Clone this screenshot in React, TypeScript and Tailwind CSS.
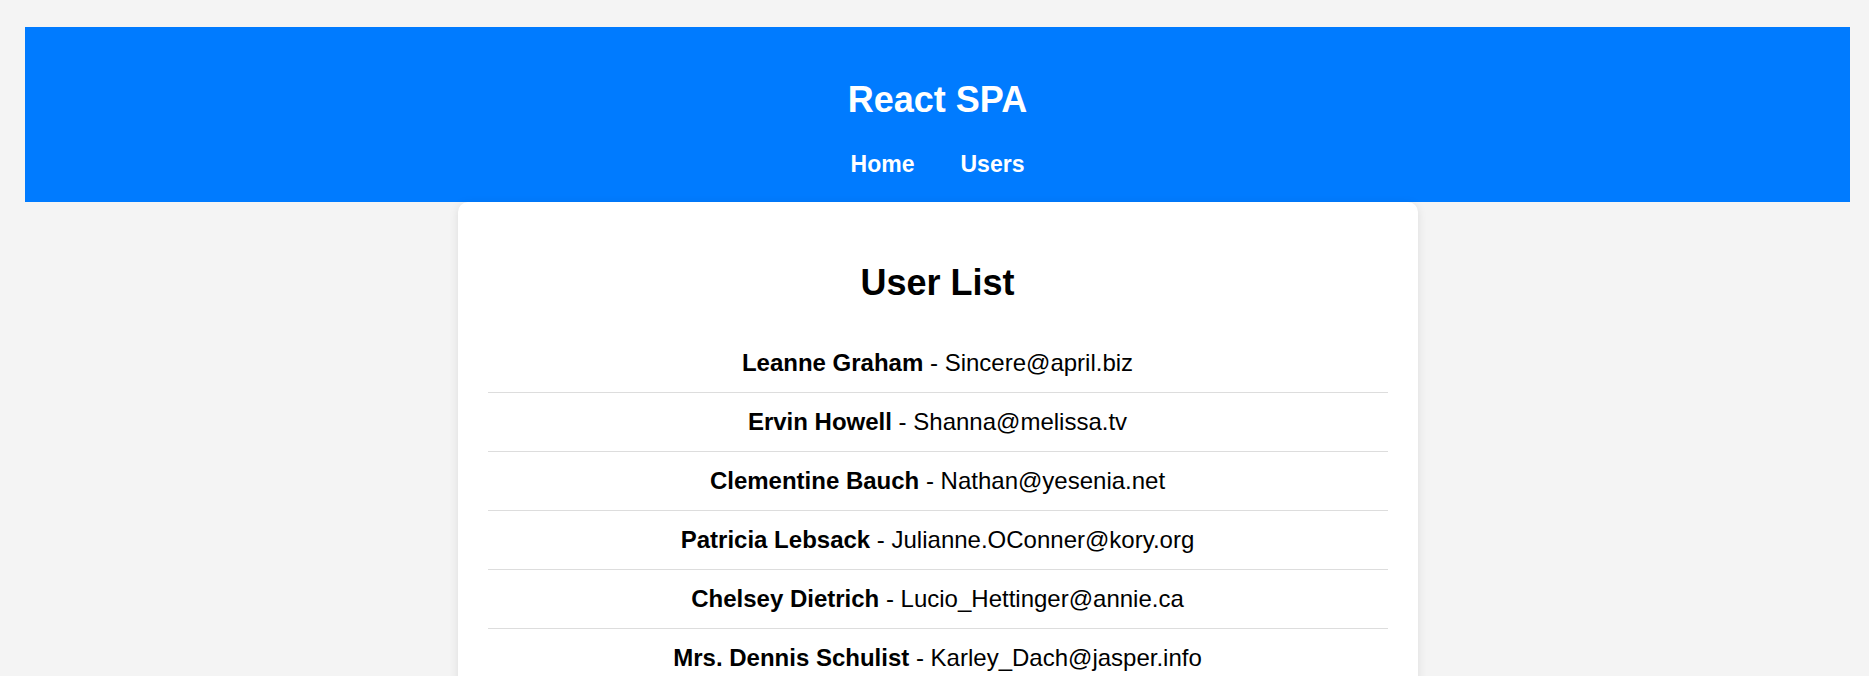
const users = [
  { name: 'Leanne Graham', email: 'Sincere@april.biz' },
  { name: 'Ervin Howell', email: 'Shanna@melissa.tv' },
  { name: 'Clementine Bauch', email: 'Nathan@yesenia.net' },
  { name: 'Patricia Lebsack', email: 'Julianne.OConner@kory.org' },
  { name: 'Chelsey Dietrich', email: 'Lucio_Hettinger@annie.ca' },
  { name: 'Mrs. Dennis Schulist', email: 'Karley_Dach@jasper.info' },
  { name: 'Kurtis Weissnat', email: 'Telly.Hoeger@billy.biz' },
  { name: 'Nicholas Runolfsdottir V', email: 'Sherwood@rosamond.me' },
];

export default function App() {
  return (
    <div className="min-h-screen bg-[#f4f4f4] pt-[27px] pl-[25px] pr-[19px] font-['Liberation_Sans',Arial,sans-serif] text-black">
      <header className="flex h-[175px] flex-col items-center bg-[#007bff] text-white">
        <h1 className="mt-[52px] text-[36px] font-bold leading-[41px]">React SPA</h1>
        <nav className="mt-[31px] flex gap-[46px] text-[23px] font-bold leading-[27px]">
          <a href="#" className="text-white no-underline">Home</a>
          <a href="#" className="text-white no-underline">Users</a>
        </nav>
      </header>

      <main className="mx-auto w-[960px] rounded-[10px] bg-white px-[30px] pt-[60px] pb-[30px] shadow-[0_2px_10px_rgba(0,0,0,0.1)]">
        <h2 className="text-center text-[36px] font-bold leading-[41px]">User List</h2>
        <ul className="mt-[31px]">
          {users.map(user => (
            <li
              key={user.email}
              className="border-b border-[#ddd] py-[15px] text-center text-[24px] leading-[28px]"
            >
              <strong className="font-bold">{user.name}</strong> - {user.email}
            </li>
          ))}
        </ul>
      </main>
    </div>
  );
}
